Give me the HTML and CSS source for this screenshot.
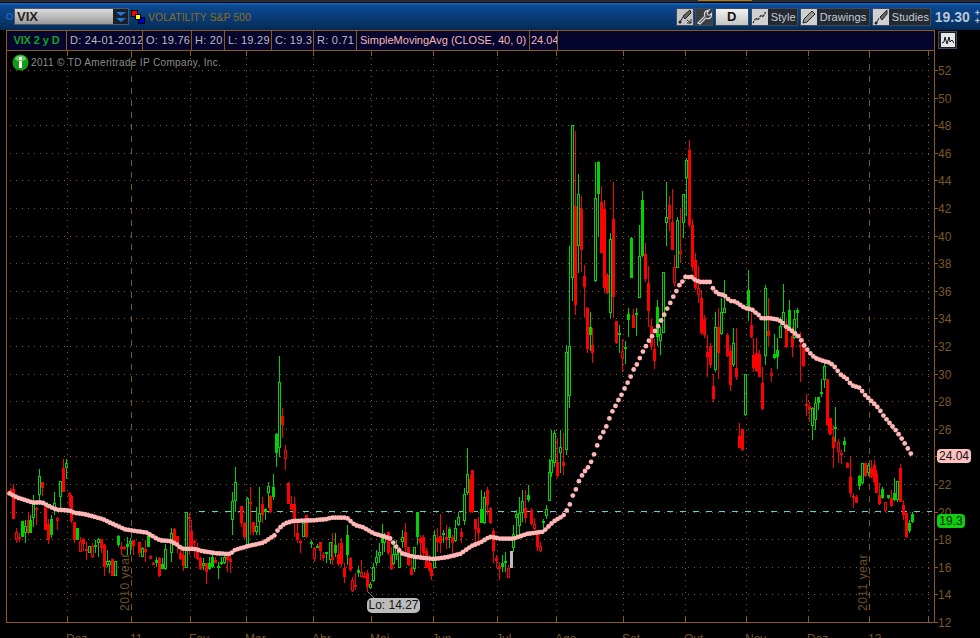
FILE: index.html
```html
<!DOCTYPE html>
<html lang="pt">
<head>
<meta charset="utf-8">
<title>VIX</title>
<link rel="stylesheet" href="styles.css">
</head>
<body>
<div class="app">
  <div class="topstrip"><span class="topmark"></span></div>
  <header class="header">
    <span class="ring"></span>
    <div class="symbol">
      <span class="symbol-text">VIX</span>
      <span class="symbol-drop">
        <svg width="14" height="16" viewBox="0 0 14 16"><path d="M2 3h10L7 7z M2 9h10l-5 4z" fill="#1f78d8"/></svg>
      </span>
    </div>
    <svg class="links" width="14" height="14" viewBox="0 0 14 14">
      <rect x="0.5" y="0.5" width="6" height="6" fill="#f00" stroke="#000"/>
      <rect x="7.5" y="7.5" width="6" height="6" fill="#00c" stroke="#000"/>
      <rect x="4.5" y="4.5" width="5" height="5" fill="#ff0" stroke="#000"/>
    </svg>
    <span class="desc">VOLATILITY S&amp;P 500</span>
    <div class="tools">
      <span class="tool icon-only">
        <svg class="glyph" width="16" height="16" viewBox="0 0 16 16"><rect width="16" height="16" fill="#c4c4c4"/><path d="M3 13l3-5M6 7l7-6 1 3-6 6z" stroke="#222" fill="#666"/><circle cx="3" cy="13" r="1.500" fill="#222"/><path d="M10 11l4 3M14 10v4h-4" stroke="#222" fill="none"/></svg>
      </span>
      <span class="tool icon-only">
        <svg class="glyph" width="16" height="16" viewBox="0 0 16 16"><rect width="16" height="16" fill="#3a3f45"/><path d="M2 14l7-7a4 4 0 0 1 1-5l3-1-2 3 1 2 2 0 2-2-1 4a4 4 0 0 1-5 1l-6 6z" fill="none" stroke="#d8d8d8" stroke-width="1.200"/></svg>
      </span>
      <span class="tool period">D</span>
      <span class="tool labelled t-style">
        <svg class="glyph" width="16" height="16" viewBox="0 0 16 16"><rect width="16" height="16" fill="#d0d0d0"/><path d="M1 14l3-5 2 2 3-5 2 2 3-6" stroke="#222" stroke-width="1.200" fill="none" stroke-dasharray="2 1"/></svg>
        Style
      </span>
      <span class="tool labelled t-draw">
        <svg class="glyph" width="16" height="16" viewBox="0 0 16 16"><rect width="16" height="16" fill="#d0d0d0"/><path d="M2 14l1-4 8-8 3 3-8 8z" fill="#999" stroke="#222"/></svg>
        Drawings
      </span>
      <span class="tool labelled t-stud">
        <svg class="glyph" width="16" height="16" viewBox="0 0 16 16"><rect width="16" height="16" fill="#d0d0d0"/><path d="M3 15l3-6M7 8l7-7v4l-5 6z" fill="#666" stroke="#222"/><circle cx="3" cy="14" r="1.500" fill="#222"/></svg>
        Studies
      </span>
    </div>
    <span class="last">19.30</span>
    <span class="plus">+<br>+</span>
  </header>
  <div class="inforow">
    <div class="info">
      <span class="cell name">VIX 2 y D</span>
      <span class="cell">D: 24-01-2012</span>
      <span class="cell">O: 19.76</span>
      <span class="cell">H: 20</span>
      <span class="cell">L: 19.29</span>
      <span class="cell">C: 19.3</span>
      <span class="cell">R: 0.71</span>
      <span class="cell pink">SimpleMovingAvg (CLOSE, 40, 0)</span>
      <span class="cell pink tight">24.04</span>
      <span class="cell"></span>
    </div>
    <span class="mini">
      <svg width="14" height="14" viewBox="0 0 14 14"><rect width="14" height="14" fill="#e4e4e4"/><path d="M1 10l2-1 1-5 2 7 2-7 1 5 2-2 2 3" stroke="#111" fill="none"/></svg>
    </span>
  </div>
  <main class="chart" id="chart">
    <div class="notice">
      <svg width="17" height="17" viewBox="0 0 17 17">
        <circle cx="8.500" cy="8.500" r="8" fill="#149a14"/>
        <ellipse cx="8.500" cy="4.500" rx="5.500" ry="3" fill="#5fcf5f"/>
        <rect x="7" y="7" width="3" height="7" fill="#fff"/>
        <rect x="7" y="3" width="3" height="3" fill="#fff"/>
      </svg>
      <span>2011 © TD Ameritrade IP Company, Inc.</span>
    </div>
    <span class="badge ma-badge">24.04</span>
    <span class="badge close-badge">19.3</span>
    <span class="badge lo-badge">Lo: 14.27</span>
  </main>
</div>
<script src="chart.js"></script>
</body>
</html>
```
FILE: styles.css
```css
* { box-sizing: border-box; }
html, body { margin: 0; height: 100%; background: #000; }
body { overflow: hidden; font-family: "Liberation Sans", Arial, sans-serif; }
.app {
  width: 980px; height: 638px; display: flex; flex-direction: column;
  background: #000; overflow: hidden;
}
.topstrip { height: 3px; background: #2c2c2c; border-bottom: 1px solid #000; position: relative; flex: none; }
.topmark { display: block; margin-left: 698px; width: 54px; height: 1px; background: #b87a10; }
.header {
  height: 27px; flex: none; display: flex; align-items: center;
  padding: 0 0 0 6px; overflow: hidden;
  background: linear-gradient(#0b66cc 0, #0b66cc 1px, #0c4a94 2px, #06305f 24px, #052850 100%);
}
.ring { width: 7px; height: 7px; border-radius: 50%; border: 1px solid #2a78d8; background: #0a3f86; flex: none; }
.symbol {
  margin-left: 1px; width: 115px; height: 17px; display: flex; flex: none;
  border: 1px solid #4a5a6a;
  background: linear-gradient(#dcdcdc, #999);
}
.symbol-text { flex: 1; font-size: 13px; font-weight: bold; color: #222; line-height: 15px; padding-left: 2px; }
.symbol-drop { width: 15px; background: #1a2028; display: flex; align-items: center; justify-content: center; }
.links { margin-left: 2px; flex: none; }
.desc { margin-left: 3px; color: #8f6c14; font-size: 10.500px; white-space: nowrap; }
.tools { margin-left: auto; display: flex; gap: 1px; align-items: center; flex: none; }
.tool {
  height: 18px; display: flex; align-items: center; gap: 3px;
  background: #24292f; border: 1px solid #3a4c60; color: #c4ccd4; font-size: 11px;
  padding: 0; white-space: nowrap; overflow: hidden; letter-spacing: .1px;
}
.glyph { flex: none; }
.icon-only { width: 18px; justify-content: center; }
.period {
  width: 34px; margin-left: 1px; justify-content: center;
  background: linear-gradient(#f2f2f2, #c4c4c4); color: #111; font-weight: bold; font-size: 13px;
}
.labelled { margin-left: 1px; }
.t-style { width: 47px; }
.t-draw { width: 70px; }
.t-stud { width: 59px; }
.last { margin-left: 4px; width: 40px; flex: none; color: #b8c8d8; font-size: 14px; font-weight: bold; }
.plus { color: #b8c8d8; font-size: 9px; line-height: 8px; font-weight: bold; flex: none; }
.inforow { height: 21px; flex: none; display: flex; padding-left: 6px; background: #000; }
.info {
  width: 929px; display: grid; flex: none;
  grid-template-columns: 60px 76px 49px 33px 47px 42px 43px 173px 28px 1fr;
  border: 1px solid #8a5a1e;
  background: #05052e;
}
.cell {
  border-right: 1px solid #8a5a1e; color: #bcbcbc; font-size: 11px; line-height: 18px;
  padding-left: 3px; white-space: nowrap; overflow: hidden; letter-spacing: .25px;
}
.cell:last-child { border-right: 0; }
.name { color: #0fa32a; font-weight: bold; text-align: center; padding-left: 0; letter-spacing: -.1px; }
.pink { color: #f4b8b8; letter-spacing: 0; }
.tight { padding-left: 1px; }
.mini {
  margin: 1px 0 0 3px; width: 19px; height: 18px; flex: none; display: flex;
  align-items: center; justify-content: center; background: #1a1e24; border: 1px solid #3a4c60;
}
.chart { flex: 1; position: relative; overflow: hidden; }
.chart svg.plot { display: block; width: 980px; height: 587px; }
.notice {
  position: absolute; left: 12px; top: 3px; display: flex; align-items: center; gap: 2px;
  color: #8c8c8c; font-size: 10px; letter-spacing: .35px; white-space: nowrap;
}
.badge {
  position: absolute; font-size: 12px; line-height: 14px; height: 14px; color: #111;
  border-radius: 4px; text-align: center;
}
.ma-badge { left: 937px; top: 398px; width: 34px; background: #ffc0c0; }
.close-badge { left: 937px; top: 463px; width: 28px; background: #0cd20c; }
.lo-badge { left: 367px; top: 547px; width: 53px; height: 15px; background: #bcbcbc; border-radius: 5px; }
```
FILE: chart.js
```js
(function () {
  var NS = 'http://www.w3.org/2000/svg';
  var chart = document.getElementById('chart');
  var svg = document.createElementNS(NS, 'svg');
  svg.setAttribute('class', 'plot');
  svg.setAttribute('viewBox', '0 51 980 587');
  svg.setAttribute('shape-rendering', 'crispEdges');
  chart.insertBefore(svg, chart.firstChild);

  function el(name, attrs, text) {
    var e = document.createElementNS(NS, name);
    for (var k in attrs) e.setAttribute(k, attrs[k]);
    if (text !== undefined) e.textContent = text;
    svg.appendChild(e);
    return e;
  }
  function rect(x, y, w, h, fill) {
    if (h <= 0 || w <= 0) return;
    el('rect', { x: x, y: y, width: w, height: h, fill: fill });
  }
  var AXIS = '#8a5a1e', DOT = '#8a5a1e', LABEL = '#7c5726';
  var yOf = function (p) { return Math.round(622 - (p - 12) * 13.8); };
  var months = [[67, 'Dez'], [131, '11'], [190, 'Fev'], [246, 'Mar'], [313, 'Abr'], [371, 'Mai'], [433, 'Jun'],
    [497, 'Jul'], [556, 'Ago'], [623, 'Set'], [685, 'Out'], [746, 'Nov'], [808, 'Dez'], [869, '12'], [928, '']];

  // horizontal dotted grid and right axis
  for (var p = 14; p <= 52; p += 2) {
    var gy = yOf(p) + 0.5;
    el('line', { x1: 10, x2: 934, y1: gy, y2: gy, stroke: DOT, 'stroke-dasharray': '1 5' });
  }
  for (p = 12; p <= 52; p += 2) {
    var ty = yOf(p) + 0.5;
    el('line', { x1: 934, x2: 938, y1: ty, y2: ty, stroke: AXIS });
    if (p !== 24) el('text', { x: 938, y: yOf(p) + 5, fill: LABEL, 'font-size': 12, 'font-family': 'Liberation Sans, sans-serif' }, String(p));
  }
  // vertical dotted grid, ticks, month labels
  months.forEach(function (m) {
    var x = m[0] + 0.5, year = m[0] === 131 || m[0] === 869;
    el('line', {
      x1: x, x2: x, y1: 52, y2: 622, stroke: year ? '#6e5a30' : DOT,
      'stroke-dasharray': year ? '6 6' : '1 5'
    });
    el('line', { x1: x, x2: x, y1: 51, y2: 56, stroke: AXIS });
    el('line', { x1: x, x2: x, y1: 617, y2: 622, stroke: AXIS });
    if (m[1]) el('text', { x: m[0] - 1, y: 643, fill: LABEL, 'font-size': 12, 'font-family': 'Liberation Sans, sans-serif' }, m[1]);
  });
  // frame
  rect(6, 51, 1, 572, AXIS);
  rect(934, 51, 1, 572, AXIS);
  rect(6, 622, 929, 1, AXIS);
  // price line at 20
  el('line', { x1: 199, x2: 932, y1: 511.5, y2: 511.5, stroke: '#55d5d5', 'stroke-dasharray': '6 7' });

  // candles: type, x, wick top, body top, body bottom, wick bottom, in crop units (1/3 px)
  var groups = [
    [0, 440,
      'R,31,143,150,160,165;R,40,133,148,237,237;r,49,265,277,300,310;R,58,280,290,297,305;G,67,243,243,290,290;g,76,240,257,278,308;R,85,217,240,280,285;G,91,225,240,278,280;g,100,165,193,233,260;R,109,200,203,210,255;g,118,87,108,165,195;R,127,125,125,143,168;R,136,202,202,270,270;R,145,237,253,300,312;G,154,225,237,285,295;g,163,155,190,205,225;r,172,232,235,243,270;g,181,123,123,170,203;R,190,57,85,155,155;g,199,57,70,85,117;r,208,157,160,167,200;R,213,165,168,243,250;R,223,245,247,300,310;G,232,265,265,300,300;r,241,290,303,335,335;R,250,293,298,312,333;R,259,305,327,333,360;g,268,318,318,338,338;r,277,310,318,352,355;G,286,300,315,320,340;g,295,295,298,310,350;R,304,297,297,325,340;R,313,313,315,380,407;g,322,330,362,375,380;g,328,360,362,375,400;R,337,357,358,408,408;g,346,362,362,408,408;G,355,285,288,315,320;R,364,305,320,328,345;R,373,318,320,328,330;G,382,290,312,322,345;g,391,295,303,312,345;R,400,300,300,318,345;R,418,305,307,340,350;g,427,320,325,350,352;R,436,300,327,335,365;G,445,285,287,320,320;r,451,345,347,358,358;R,460,367,369,375,375;G,469,350,360,368,380;R,478,352,355,408,410;G,487,355,372,388,388;g,496,312,327,388,390;g,514,265,280,340,365;R,523,263,268,310,310;R,532,288,288,310,340;R,541,320,340,357,360;R,550,330,345,378,392;g,559,215,215,385,385;R,568,220,232,235,345;R,574,240,273,320,320;R,583,300,303,310,355;R,592,310,333,357,360;R,601,350,353,388,390;g,610,355,370,378,390;R,619,370,370,395,432;G,628,350,370,388,390;G,637,345,352,382,385;R,646,350,360,370,370;G,655,365,378,385,418;g,664,350,367,370,375;g,673,335,350,370,372;R,682,338,340,360,395;R,691,345,358,365,400;g,697,155,183,240,285;g,706,82,127,183,215;R,724,198,198,250,260;R,733,245,248,290,300;g,742,172,175,315,315;R,751,140,185,190,285;R,760,245,247,277,285;g,769,200,257,277,285;g,778,140,218,247,285;R,787,172,192,225,250;G,796,205,208,215,240;g,805,125,138,160,205;R,811,165,168,217,220;G,820,103,142,172,180;R,865,125,128,192,192;R,874,168,192,210,210;R,883,170,192,240,290;R,892,250,280,300,310;R,901,300,303,305,340;g,910,250,250,290,290;R,919,225,225,292,295;G,934,300,305,310,325;r,943,320,325,358,365;G,952,313,317,322,325;R,961,305,305,333,360;r,970,335,345,355,362;g,979,335,337,342,370'],
    [200, 340, 'G,229,280,282,338,380;g,238,48,127,325,350;R,247,205,228,255,293;r,256,315,331,356,390'],
    [330, 440,
      'g,0,305,305,360,372;R,7,280,350,360,375;G,16,280,315,340,350;R,25,310,342,372,378;R,34,295,310,372,380;R,43,370,383,410,430;G,52,255,285,345,375;R,61,352,355,390,395;r,67,410,420,452,455;R,76,400,435,440,450;G,85,378,390,398,410;r,94,360,397,410,412;R,103,395,407,413,415;R,112,390,400,440,455;g,121,425,432,443,447;g,130,370,382,422,425;g,139,330,352,370,378;g,148,310,337,347,370;G,157,253,283,310,345;g,163,280,290,310,335;R,175,275,275,340,345;R,184,320,345,387,390;g,190,310,343,372,375;g,199,300,320,345,360;g,208,320,333,383,383;g,217,270,290,305,325;R,226,250,277,322,345;R,235,320,320,375,378;R,244,350,383,405,405;g,253,322,322,388,395;G,262,215,215,292,315;R,271,285,293,310,345;R,280,285,290,340,345;R,289,325,332,383,385;R,298,345,365,390,395;R,303,370,387,408,420;g,313,270,285,385,385;R,322,265,295,305,335;R,331,222,288,310,340;G,340,270,280,285,310;R,349,255,290,300,328;G,358,260,267,293,325;R,367,285,290,310,340;g,376,240,265,303,305;g,385,215,232,255,258;R,394,265,277,292,310;g,403,145,163,243,255;g,412,25,103,160,165;R,421,105,118,215,218;R,427,90,90,215,218;R,436,237,238,267,305;R,445,230,263,278,310;G,454,150,208,248,250;g,463,155,172,250,252;R,472,140,150,195,225;R,481,200,203,250,252;R,490,265,273,332,370;R,499,345,353,362,385;R,508,365,378,388,420;G,517,345,370,380,395;G,526,335,363,370,395;r,535,375,385,413,415;A,544,333,333,385,385;g,550,255,283,323,335;g,559,210,223,235,290;g,568,170,220,258,285;g,577,150,183,220,245;R,586,150,205,235,250;G,595,135,165,180,185;R,604,205,210,252,255;r,613,235,253,268,270;R,622,280,280,320,333;r,631,305,318,333,335;G,640,238,243,248,265;g,649,195,208,228,238;g,658,58,95,182,182;g,664,-30,60,100,110;g,673,-30,-20,70,80;R,682,-5,65,108,115;g,691,-30,20,40,100;R,700,-20,67,77,105'],
    [540, 110,
      'g,97,45,45,505,572;R,106,63,288,585,615;g,115,192,253,407,488;R,124,258,296,420,485;R,133,465,498,530,625;g,166,155,265,513,515;G,175,152,155,252,380;R,184,228,276,428,430;R,193,270,297,533,550;R,202,488,495,548,552;g,211,368,388,608,625;R,220,215,327,560,625;G,274,380,385,503,505;g,298,345,438,563,565;G,307,243,270,438,440;R,316,400,433,507,515;R,325,468,518,602,652;g,370,487,487,668,670;g,379,215,322,338,408;R,388,258,285,328,362;R,397,237,335,420,420;r,403,435,472,520,530;g,412,322,330,473,475;r,421,293,423,433,460;g,430,252,252,340,385;g,438,145,150,203,317;R,448,90,120,345,350;R,457,327,345,470,483;R,466,430,450,533,540;r,475,468,535,556,580'],
    [540, 270,
      'g,79,225,245,540,555;g,88,-72,228,378,415;R,142,112,113,237,250;G,151,127,172,195,243;R,157,175,225,248,280;R,229,152,153,218,222;G,238,165,190,193,248;r,247,207,243,263,305;G,256,213,232,236,282;G,265,115,132,150,200;R,280,117,135,173,175;G,289,115,130,133,197;R,334,148,168,232,240;R,343,207,237,272,297;G,352,90,112,200,228;g,361,170,192,212,255;R,484,60,85,188,195;R,493,135,148,195,205;R,502,195,247,260,320;R,511,220,228,285,295;R,520,312,348,388,395;g,527,125,172,300,305;R,535,113,170,248,327;g,544,83,127,192,195;g,553,30,115,128,130;R,562,188,195,258,260;R,571,225,243,345,363;g,580,175,218,285,290;R,589,175,295,320,330;g,616,312,313,435,438;G,625,0,60,110,152;R,634,130,165,200,205;R,640,205,255,293,305;R,649,205,250,303,305;R,658,240,252,320,322;R,667,292,340,417,420;g,676,45,55,257,285;R,685,85,183,197,230;r,694,293,310,317,335;G,703,192,252,265,268;G,712,205,240,262,296;g,721,140,167,203,205;g,730,42,125,155,158;R,739,145,170,232,235;G,748,90,120,178,180;R,757,170,198,230,260;g,763,120,148,203,206;G,772,115,120,128,175;r,781,185,225,232,335;R,790,205,235,288,290;R,800,373,403,406,437;R,808,395,408,420,453;g,817,410,415,467,510;g,826,382,400,450,478;g,835,387,388,398,420;G,844,328,367,372,380;g,853,280,287,330,355;R,863,327,327,465,467;R,868,445,445,490,495'],
    [650, 400,
      'R,268,70,108,143,145;R,277,88,88,150,152;g,286,-20,-20,45,47;R,337,-20,-20,25,28;R,470,-10,13,18,45;R,478,15,20,23,65;g,487,20,25,77,120;g,496,0,8,60,90;G,505,-10,-8,8,10;R,532,-20,-20,75,78;R,541,55,55,103,105;R,550,75,112,143,203;G,556,20,82,87,125;r,565,118,125,155,190;R,574,150,160,165,192;G,583,110,123,135,155;R,592,185,190,205,205;R,601,172,232,280,292;R,610,280,287,293,325;R,619,285,290,308,308;G,628,225,228,258,270;g,637,190,190,250,252;R,646,190,190,228,230;g,655,190,195,220,228;R,664,180,205,230,233;R,672,180,195,245,248;R,680,210,222,278,280;R,688,250,285,312,315;G,697,262,267,295,297;r,706,305,307,333,335;G,715,285,285,295,297;R,724,270,295,318,320;G,733,235,278,300,302;g,742,242,243,300,305;R,751,192,205,305,307;R,760,300,315,345,360;R,769,338,340,412,415;G,778,360,368,392,400;G,787,335,343,367,368']
  ];
  var colour = { g: '#00d400', G: '#00d400', r: '#ff0000', R: '#ff0000', A: '#bdbdbd' };
  groups.forEach(function (g) {
    g[2].split(';').forEach(function (row) {
      var f = row.split(','), t = f[0], n = f.slice(1).map(Number);
      var px = Math.floor(g[0] + n[0] / 3);
      var y = function (v) { return Math.round(g[1] + v / 3); };
      var c = colour[t], wt = y(n[1]), bt = y(n[2]), bb = y(n[3]), wb = y(n[4]);
      rect(px, wt, 1, wb - wt, c);
      rect(px - 1, bt, 3, Math.max(bb - bt, 2), c);
      if ((t === 'g' || t === 'r') && bb - bt > 2) rect(px, bt + 1, 1, bb - bt - 2, '#000');
    });
  });

  // year captions lie over the candles
  [[129, '2010 year'], [867, '2011 year']].forEach(function (c) {
    el('text', {
      transform: 'translate(' + c[0] + ' 611) rotate(-90)', fill: '#6f5226', 'font-size': 12,
      'letter-spacing': '.5', 'font-family': 'Liberation Sans, sans-serif'
    }, c[1]);
  });

  // moving average
  function pts(ox, oy, list) {
    return list.map(function (q) { return [ox + q[0] / 3, oy + q[1] / 3]; });
  }
  var line = [].concat(
    pts(0, 440, [[28,160],[50,172],[75,180],[100,188],[125,187],[150,200],[170,209],[210,212],[225,219],[250,222],[275,228],[310,238],[330,248],[350,257],[375,268],[400,272],[440,278],[465,293],[480,301],[510,303],[530,313],[545,326],[585,327],[610,334],[650,340],[690,342],[705,330],[745,318],[790,308],[825,285],[835,267],[855,250],[880,243],[940,241],[985,237]]),
    pts(330, 440, [[0,233],[50,233],[75,255],[100,262],[130,280],[180,295],[200,322],[215,340],[250,350],[310,357],[350,352],[390,342],[425,318],[450,308],[480,290],[510,296],[550,296],[590,282],[640,275],[670,245],[700,227],[708,215],[717,201],[726,171],[735,156],[744,129],[753,111],[762,96],[771,87],[780,72],[786,60],[795,36],[804,9]]),
    pts(540, 270, [[183,497],[192,483],[201,465],[210,440],[219,420],[228,405],[237,387],[246,372],[255,353],[264,336],[273,318],[279,302],[288,288],[297,270],[306,249],[315,234],[324,216],[333,204],[342,188],[351,174],[360,158],[369,141],[378,123],[387,105],[396,90],[402,75],[411,60],[420,42],[429,33],[438,18],[447,22],[456,21],[465,30],[480,36],[510,36],[516,51],[525,63],[535,72],[552,75],[561,84],[570,93],[585,94],[600,104],[615,114],[635,118],[648,129],[657,136],[666,146],[685,144],[710,148],[725,155],[738,170],[755,182],[771,195],[780,204],[789,221],[798,234]]),
    pts(780, 290, [[87,186],[105,204],[130,213],[150,218],[165,232],[173,242],[183,255],[200,266],[210,279],[220,288],[238,293],[246,303],[255,315],[264,323],[275,334],[288,347],[297,356],[306,371],[315,383],[324,393],[333,405],[342,414],[351,426]]),
    pts(650, 400, [[660,0],[675,15],[690,30],[705,52],[714,62],[723,75],[732,85],[741,96],[750,108],[759,122],[768,136],[777,152],[787,168]])
  );
  var seg = 0;
  for (var x = 9.5; x <= 912.5; x += 3.045) {
    while (seg < line.length - 2 && line[seg + 1][0] < x) seg++;
    var a = line[seg], b = line[seg + 1];
    var k = (x - a[0]) / ((b[0] - a[0]) || 1);
    el('circle', { cx: x.toFixed(1), cy: (a[1] + (b[1] - a[1]) * k).toFixed(1), r: 2.4, fill: '#ffb6b6', 'shape-rendering': 'auto' });
  }
  // leader of the low label
  el('line', { x1: 368, y1: 592, x2: 374, y2: 598, stroke: '#8a8a8a', 'shape-rendering': 'auto' });
})();
```
